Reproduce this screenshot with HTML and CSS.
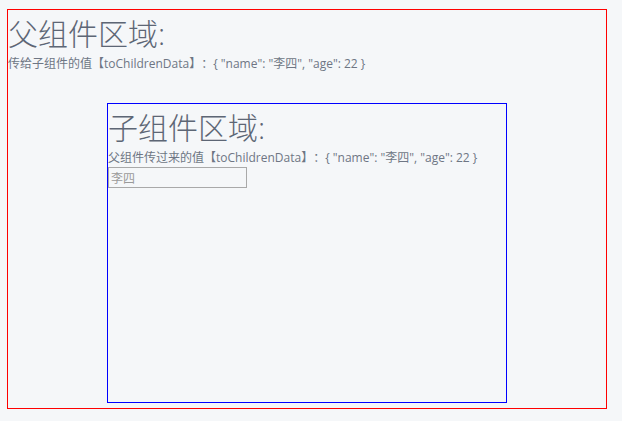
FILE: index.html
```html
<!DOCTYPE html>
<html lang="zh-CN">
<head>
<meta charset="utf-8">
<title>父子组件</title>
<link rel="stylesheet" href="styles.css">
</head>
<body>
<div class="parent">
  <h1 class="title">父组件区域:</h1>
  <p class="info">传给子组件的值【toChildrenData】：{ "name": "李四", "age": 22 }</p>
  <div class="child">
    <h1 class="title">子组件区域:</h1>
    <p class="info">父组件传过来的值【toChildrenData】：{ "name": "李四", "age": 22 }</p>
    <input class="field" type="text" value="李四">
  </div>
</div>
</body>
</html>
```
FILE: styles.css
```css
html, body {
  margin: 0;
  background: #f5f7f9;
}
body {
  padding: 9px 0 0 7px;
  font-family: "Open Sans", "Noto Sans CJK SC", sans-serif;
  color: #515a6e;
  text-spacing-trim: space-all;
}
.parent {
  box-sizing: border-box;
  width: 600px;
  height: 400px;
  border: 1px solid #ff0000;
}
.title {
  margin: 9px 0 0;
  font-size: 30px;
  line-height: 30px;
  font-weight: 300;
  color: #5d6675;
}
.info {
  margin: 7px 0 0;
  font-size: 12px;
  line-height: 16px;
  color: #6e7684;
}
.child {
  box-sizing: border-box;
  width: 400px;
  height: 300px;
  margin: 31px auto 0;
  border: 1px solid #0000ff;
}
.field {
  box-sizing: border-box;
  display: block;
  width: 139px;
  height: 21px;
  margin: 1px 0 0;
  padding: 0 2px;
  border: 1px solid #a9a9a9;
  background: #f5f7f9;
  font-family: "Open Sans", "Noto Sans CJK SC", sans-serif;
  font-size: 12px;
  color: #9a9a9a;
  outline: none;
}
```
